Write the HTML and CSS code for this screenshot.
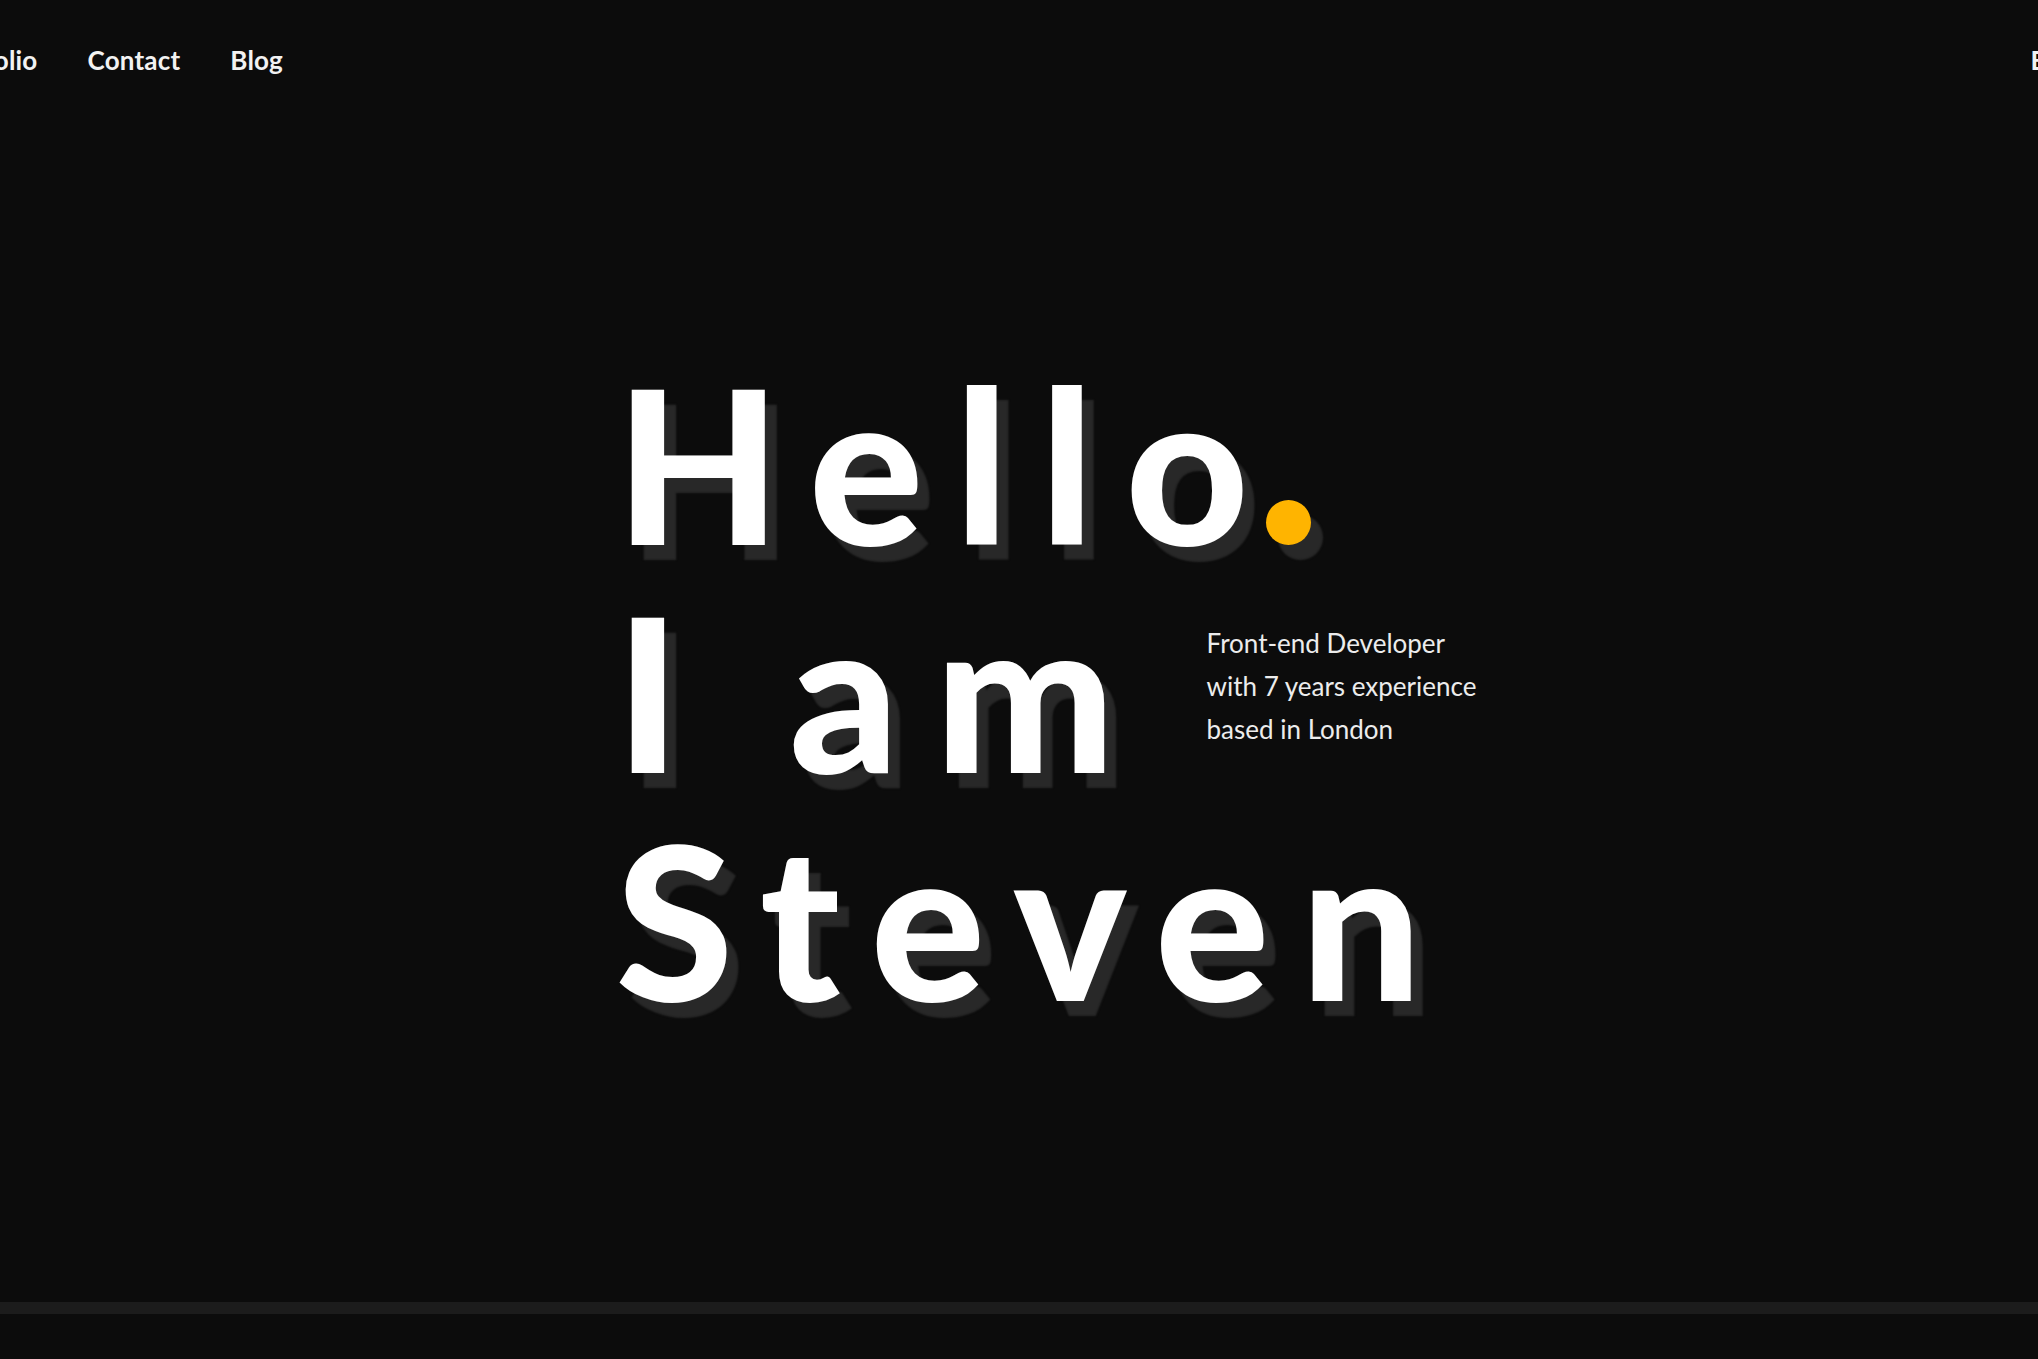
FILE: index.html
```html
<!DOCTYPE html>
<html lang="en">
<head>
<meta charset="utf-8">
<title>Steven</title>
<link rel="stylesheet" href="styles.css">
</head>
<body>
<header class="nav">
  <a class="nav-link nav-first" href="#">Portfolio</a>
  <a class="nav-link" href="#">Contact</a>
  <a class="nav-link" href="#">Blog</a>
  <span class="nav-spacer"></span>
  <a class="nav-link nav-edge" href="#">EN</a>
</header>
<main class="hero">
  <div class="hero-block">
    <h1 class="title">
      <span class="line">Hello<span class="dot"></span></span>
      <span class="line line-row"><span class="word">I am</span>
        <span class="intro">Front-end Developer<br>with 7 years experience<br>based in London</span>
      </span>
      <span class="line">Steven</span>
    </h1>
  </div>
</main>
<div class="bar"></div>
</body>
</html>
```
FILE: styles.css
```css
html, body {
  margin: 0;
  padding: 0;
  background: #0c0c0c;
  overflow: hidden;
}
body {
  width: 2038px;
  height: 1359px;
  font-family: "Lato", "Open Sans", sans-serif;
  color: #ffffff;
  display: flex;
  flex-direction: column;
}
.nav {
  display: flex;
  align-items: center;
  height: 120px;
  gap: 50px;
  margin-left: -66px;
  margin-right: -28px;
}
.nav-link {
  color: #f2f2f2;
  text-decoration: none;
  font-size: 26px;
  font-weight: 700;
  letter-spacing: 0.2px;
}
.nav-spacer { flex: 1; }
.hero {
  flex: 1;
  display: flex;
  justify-content: center;
}
.hero-block {
  margin-top: 229px;
  margin-left: 54px;
}
.title {
  margin: 0;
  font-size: 214px;
  font-weight: 900;
  line-height: 228px;
  letter-spacing: 31px;
  word-spacing: -14px;
  display: flex;
  flex-direction: column;
  text-shadow: 12px 15px 2px #282828;
}
.line {
  display: flex;
  align-items: flex-start;
  white-space: nowrap;
}
.dot {
  display: inline-block;
  width: 45px;
  height: 45px;
  border-radius: 50%;
  background: #ffb400;
  box-shadow: 12px 15px 2px #282828;
  align-self: flex-start;
  margin-top: 151px;
  margin-left: -14px;
}
.word {
  flex: 0 0 auto;
  width: 591px;
  letter-spacing: 36px;
}
.intro {
  font-size: 26px;
  font-weight: 400;
  line-height: 43px;
  letter-spacing: 0;
  word-spacing: 0;
  text-shadow: none;
  color: #ececec;
  margin-top: 45px;
  white-space: nowrap;
}
.bar {
  height: 12px;
  background: #1c1c1c;
  margin-bottom: 45px;
}
```
